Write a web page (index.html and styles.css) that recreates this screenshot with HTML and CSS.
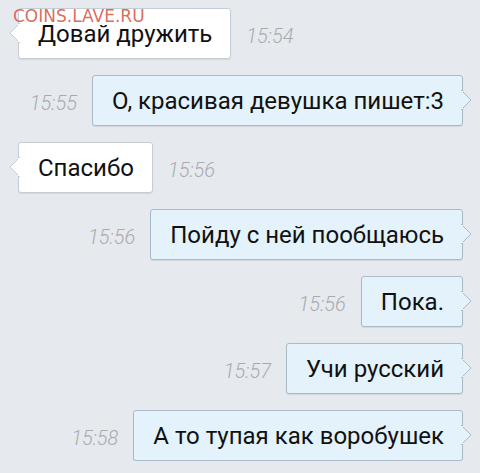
FILE: index.html
```html
<!DOCTYPE html>
<html lang="ru">
<head>
    <meta charset="UTF-8">
    <meta name="viewport" content="width=device-width, initial-scale=1.0">
    <title>Чат</title>
    <link rel="stylesheet" href="styles.css">
</head>
<body>

<div class="watermark">COINS.LAVE.RU</div>

<div class="chat">
    <div class="row in">
        <div class="bubble">Довай дружить
            <svg class="tail" width="11" height="20"><polygon points="11,0 1,10 11,20"/><rect x="9" y="1" width="3" height="18"/></svg>
        </div>
        <span class="time">15:54</span>
    </div>

    <div class="row out">
        <span class="time">15:55</span>
        <div class="bubble">О, красивая девушка пишет:3
            <svg class="tail" width="11" height="20"><polygon points="0,0 10,10 0,20"/><rect x="-1" y="1" width="3" height="18"/></svg>
        </div>
    </div>

    <div class="row in">
        <div class="bubble">Спасибо
            <svg class="tail" width="11" height="20"><polygon points="11,0 1,10 11,20"/><rect x="9" y="1" width="3" height="18"/></svg>
        </div>
        <span class="time">15:56</span>
    </div>

    <div class="row out">
        <span class="time">15:56</span>
        <div class="bubble">Пойду с ней пообщаюсь
            <svg class="tail" width="11" height="20"><polygon points="0,0 10,10 0,20"/><rect x="-1" y="1" width="3" height="18"/></svg>
        </div>
    </div>

    <div class="row out">
        <span class="time">15:56</span>
        <div class="bubble">Пока.
            <svg class="tail" width="11" height="20"><polygon points="0,0 10,10 0,20"/><rect x="-1" y="1" width="3" height="18"/></svg>
        </div>
    </div>

    <div class="row out">
        <span class="time">15:57</span>
        <div class="bubble">Учи русский
            <svg class="tail" width="11" height="20"><polygon points="0,0 10,10 0,20"/><rect x="-1" y="1" width="3" height="18"/></svg>
        </div>
    </div>

    <div class="row out">
        <span class="time">15:58</span>
        <div class="bubble">А то тупая как воробушек
            <svg class="tail" width="11" height="20"><polygon points="0,0 10,10 0,20"/><rect x="-1" y="1" width="3" height="18"/></svg>
        </div>
    </div>
</div>

</body>
</html>
```

FILE: styles.css
```css
body {
    margin: 0;
    background-color: #e6eaee;
    font-family: Roboto, "Noto Sans", Arial, sans-serif;
}
.watermark {
    position: absolute;
    z-index: 2;
    left: 13px;
    top: 9px;
    font-family: "DejaVu Sans", sans-serif;
    font-size: 17px;
    line-height: 14px;
    color: rgba(214, 90, 72, 0.9);
}
.chat {
    display: flex;
    flex-direction: column;
    gap: 16px;
    padding: 8px 17px 0 18px;
}
.row {
    display: flex;
    align-items: center;
    gap: 15px;
}
.row.out {
    justify-content: flex-end;
}
.bubble {
    position: relative;
    height: 49px;
    display: flex;
    align-items: center;
    padding: 0 18px 0 19px;
    border: 1px solid #c6ced5;
    border-radius: 3px;
    background-color: #fff;
    font-size: 24px;
    color: #111;
    box-shadow: 0 1px 1px rgba(0, 0, 0, 0.08);
}
.out .bubble {
    background-color: #e3f2fb;
    border-color: #a9bac8;
}
.time {
    font-size: 20px;
    font-style: italic;
    font-weight: 300;
    color: #a6abb0;
    padding-top: 4px;
}
.tail {
    position: absolute;
    top: 14px;
    left: -10px;
}
.tail polygon {
    fill: #fff;
    stroke: #c6ced5;
    stroke-width: 1;
}
.tail rect {
    fill: #fff;
}
.out .tail {
    left: auto;
    right: -10px;
}
.out .tail polygon {
    fill: #e3f2fb;
    stroke: #a9bac8;
}
.out .tail rect {
    fill: #e3f2fb;
}
```
